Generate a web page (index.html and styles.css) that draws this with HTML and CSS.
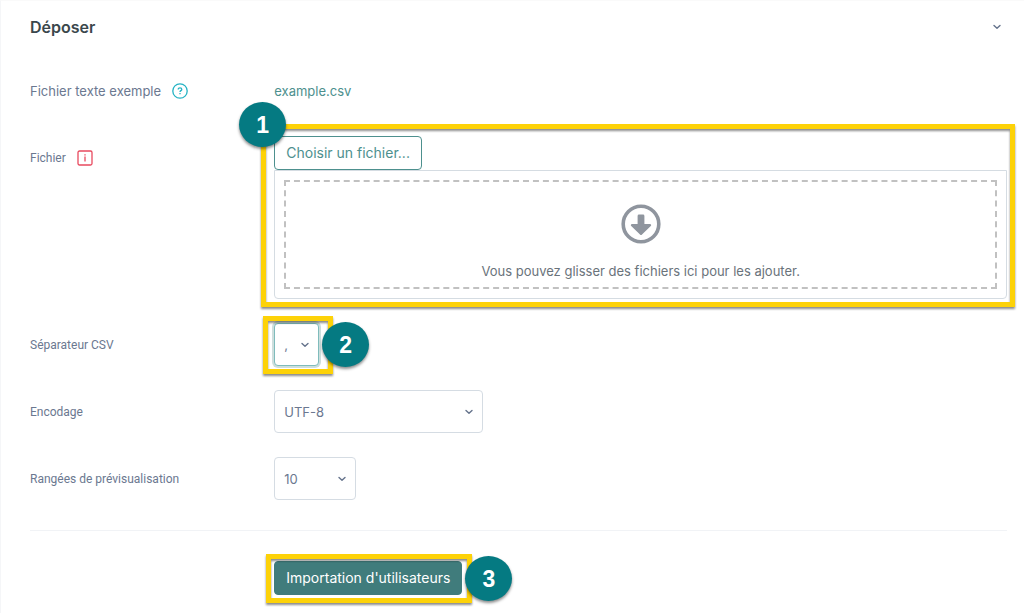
FILE: index.html
```html
<!DOCTYPE html>
<html lang="fr">
<head>
<meta charset="utf-8">
<title>Importation d'utilisateurs</title>
<link rel="stylesheet" href="styles.css">
</head>
<body>
<main class="panel">
  <header class="panel-header">
    <h1 class="panel-title">Déposer</h1>
    <button class="collapse" type="button" aria-label="Replier la section">
      <svg class="chevron" viewBox="0 0 10 8"><path d="M2 2.500 5 5.300 8 2.500"/></svg>
    </button>
  </header>
  <form class="form">
    <div class="row">
      <div class="label label-large">
        <span>Fichier texte exemple</span>
        <button class="help" type="button" aria-label="Aide">
          <svg class="icon" viewBox="0 0 16 16"><circle cx="8" cy="8" r="7.200"/><path class="mark" d="M6.200 6.600c0-1.100.8-1.800 1.800-1.800s1.800.6 1.800 1.600c0 1.200-1.800 1.300-1.800 2.500"/><path class="mark" d="M8 10v1.300"/></svg>
        </button>
      </div>
      <div class="field"><a class="link" href="#example">example.csv</a></div>
    </div>

    <div class="row row-file">
      <div class="label">
        <label for="choose">Fichier</label>
        <svg class="icon required" viewBox="0 0 16 16" role="img" aria-label="Requis"><rect x="1" y="1" width="14" height="14" rx="1.5"/><path d="M8 6.500v5M8 4.200v1.300"/></svg>
      </div>
      <div class="field file">
        <button class="button button-outline" id="choose" type="button">Choisir un fichier...</button>
        <div class="file-box">
          <div class="dropzone">
            <svg class="drop-icon" viewBox="0 0 40 40"><circle cx="20" cy="20" r="17.8"/><path d="M18 10.500h4a1.400 1.400 0 0 1 1.400 1.400V20H29a1.100 1.100 0 0 1 .8 1.900l-8.800 8.600a1.400 1.400 0 0 1-2 0l-8.800-8.600A1.100 1.100 0 0 1 11 20h5.600v-8.100a1.400 1.400 0 0 1 1.400-1.400z"/></svg>
            <p class="drop-text">Vous pouvez glisser des fichiers ici pour les ajouter.</p>
          </div>
        </div>
        <div class="highlight highlight-file"></div>
        <span class="badge badge-file">1</span>
      </div>
    </div>

    <div class="row">
      <label class="label" for="separator">Séparateur CSV</label>
      <div class="field">
        <div class="target">
          <div class="select select-small">
            <select class="focused" id="separator"><option>,</option><option>;</option></select>
            <svg class="chevron" viewBox="0 0 10 8"><path d="M2 2.500 5 5.300 8 2.500"/></svg>
          </div>
          <div class="highlight highlight-separator"></div>
          <span class="badge badge-separator">2</span>
        </div>
      </div>
    </div>

    <div class="row">
      <label class="label" for="encoding">Encodage</label>
      <div class="field">
        <div class="select select-large">
          <select id="encoding"><option>UTF-8</option></select>
          <svg class="chevron" viewBox="0 0 10 8"><path d="M2 2.500 5 5.300 8 2.500"/></svg>
        </div>
      </div>
    </div>

    <div class="row">
      <label class="label" for="preview">Rangées de prévisualisation</label>
      <div class="field">
        <div class="select select-medium">
          <select id="preview"><option>10</option><option>20</option></select>
          <svg class="chevron" viewBox="0 0 10 8"><path d="M2 2.500 5 5.300 8 2.500"/></svg>
        </div>
      </div>
    </div>

    <div class="row row-actions">
      <div class="target">
        <button class="button button-primary" type="submit">Importation d'utilisateurs</button>
        <div class="highlight highlight-submit"></div>
        <span class="badge badge-submit">3</span>
      </div>
    </div>
  </form>
</main>
</body>
</html>
```

FILE: styles.css
```css
* {
  box-sizing: border-box;
}

body {
  margin: 0;
  background: #fff;
  color: #6b7890;
  font-family: Inter, "Liberation Sans", sans-serif;
  font-size: 14px;
  line-height: 24px;
}

button,
select {
  font: inherit;
}

.panel {
  min-height: 100vh;
  padding: 14px 17px 16px 29px;
  border-top: 1px solid #fafafa;
  border-left: 1px solid #f5f6f8;
}

.panel-header {
  display: flex;
  align-items: center;
  justify-content: space-between;
  margin-bottom: 30px;
}

.panel-title {
  margin: 0;
  color: #3b474c;
  font-size: 16px;
  font-weight: 600;
  line-height: 24px;
}

.collapse,
.help {
  display: flex;
  padding: 0;
  border: 0;
  background: none;
}

.collapse {
  padding: 0 5px;
}

.chevron {
  width: 10px;
  height: 8px;
  fill: none;
  stroke: #65738c;
  stroke-width: 1.4;
  stroke-linecap: round;
  stroke-linejoin: round;
}

.form {
  display: flex;
  flex-direction: column;
  gap: 24px;
}

.row {
  display: grid;
  grid-template-columns: minmax(0, 1fr) minmax(0, 3fr);
  align-items: center;
  min-height: 43px;
}

.row-file {
  align-items: start;
}

.row-file .label {
  padding-top: 10px;
}

.row-actions {
  margin-top: 6px;
  padding-top: 30px;
  border-top: 1px solid #f1f3f6;
}

.row-actions .target {
  grid-column: 2;
}

.label {
  display: flex;
  align-items: center;
  gap: 11px;
  font-family: Roboto, "Liberation Sans", sans-serif;
  font-size: 12px;
}

.label-large {
  font-family: inherit;
  font-size: 13px;
}

.icon {
  width: 16px;
  height: 16px;
  fill: none;
  stroke: #25b3c4;
  stroke-width: 1.3;
}

.icon.required {
  stroke: #e84a5f;
}

.link {
  color: #4d908e;
  font-size: 13px;
  text-decoration: none;
}

.file,
.target {
  position: relative;
}

.target {
  display: flex;
  width: fit-content;
}

.button {
  display: block;
  height: 34px;
  padding: 0 11px;
  border: 1px solid #4d908e;
  border-radius: 4px;
  white-space: nowrap;
}

.button-outline {
  background: #fff;
  color: #4d908e;
}

.button-primary {
  border-color: #407c7c;
  background: #407c7c;
  color: #fff;
}

.file-box {
  padding: 9px;
  border: 1px solid #d5dce2;
  border-radius: 0 0 4px 4px;
}

.dropzone {
  display: flex;
  flex-direction: column;
  align-items: center;
  gap: 15px;
  padding: 22px 0 4px;
  border: 2px dashed #c1c1c1;
}

.drop-icon {
  width: 40px;
  height: 40px;
  fill: #8f959e;
}

.drop-icon circle {
  fill: none;
  stroke: #8f959e;
  stroke-width: 3.6;
}

.drop-text {
  margin: 0;
  color: #6a737b;
  font-size: 13px;
}

.select {
  display: grid;
  align-items: center;
}

.select-small {
  width: 45px;
}

.select-medium {
  width: 82px;
}

.select-large {
  width: 209px;
}

.select select,
.select .chevron {
  grid-area: 1 / 1;
}

.select select {
  width: 100%;
  height: 43px;
  padding: 0 9px;
  border: 1px solid #d5dce3;
  border-radius: 4px;
  appearance: none;
  background: #fff;
  color: #6b7890;
  font-size: 13px;
}

.select select.focused {
  border-color: #7fbcbc;
  box-shadow: 0 0 0 2px #cddedd;
}

.select .chevron {
  justify-self: end;
  margin-right: 9px;
  pointer-events: none;
}

.highlight {
  position: absolute;
  border: 5px solid #fdd208;
  filter: drop-shadow(0 2px 1px rgb(0 0 0 / 45%));
  pointer-events: none;
}

.highlight-file {
  inset: -12px -8px -8px -13px;
}

.highlight-separator {
  inset: -7px -14px -8px -11px;
}

.highlight-submit {
  inset: -7px -10px -8px -8px;
}

.badge {
  position: absolute;
  display: flex;
  align-items: center;
  justify-content: center;
  width: 47px;
  height: 45px;
  border-radius: 50%;
  background: #057a82;
  box-shadow: 0 2px 3px rgb(0 0 0 / 45%);
  color: #fff;
  font-family: "Liberation Sans", Arial, sans-serif;
  font-size: 23px;
  font-weight: 700;
}

.badge-file {
  top: -34px;
  left: -35px;
}

.badge-separator {
  top: -1px;
  left: 48px;
}

.badge-submit {
  top: -5px;
  right: -50px;
}
```
